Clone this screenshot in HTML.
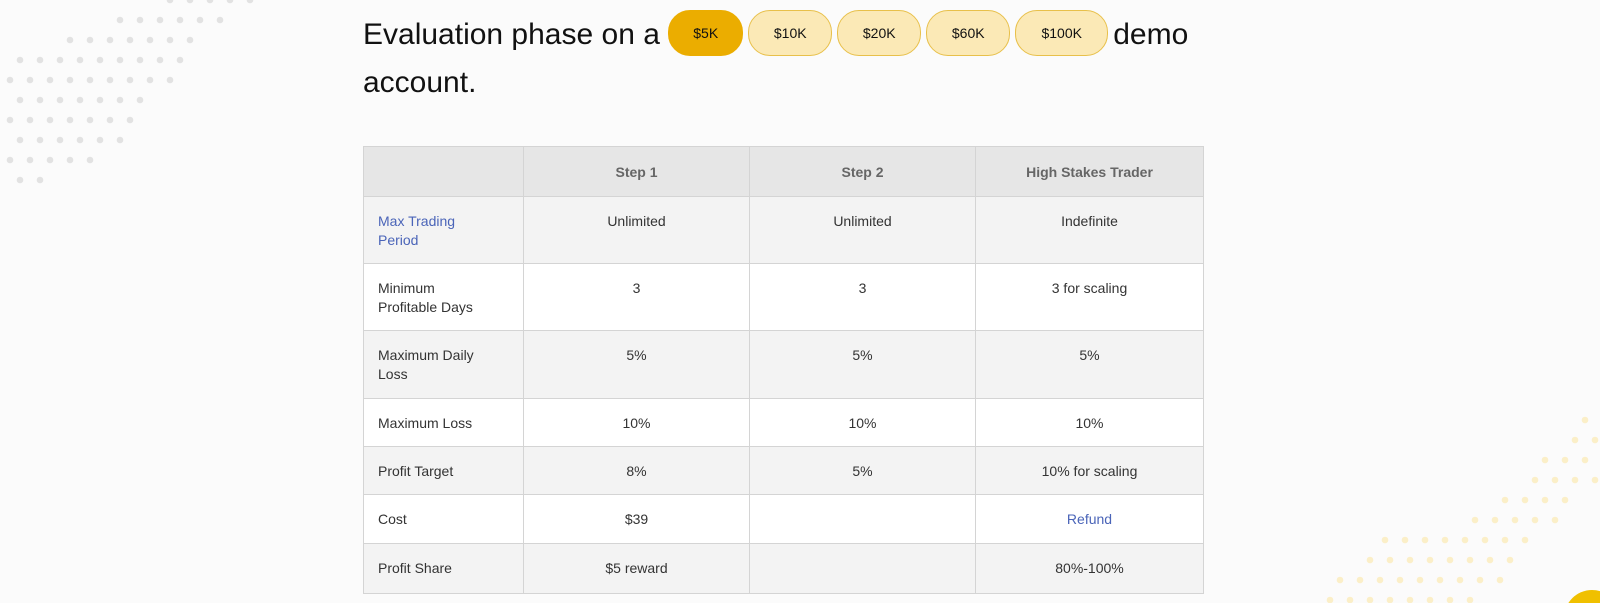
<!DOCTYPE html>
<html><head><meta charset="utf-8"><style>
html,body{margin:0;padding:0;width:1600px;height:603px;overflow:hidden;background:#fbfbfb;position:relative;}
#bg{position:absolute;left:0;top:0}
.h{position:absolute;left:363px;top:11px;width:850px;font-family:"Liberation Sans",sans-serif;font-size:30px;line-height:48px;color:#111;}
.b{display:inline-block;vertical-align:middle;height:44px;line-height:44px;border:1px solid #e8c04a;background:#fbe9b6;border-radius:22px;font-size:14px;text-align:center;margin-right:5px;position:relative;top:-3px;}
table{position:absolute;left:363px;top:146px;border-collapse:collapse;font-family:"Liberation Sans",sans-serif;font-size:14px;color:#333;}
td,th{border:1px solid #d4d4d4;padding:0;vertical-align:top;text-align:center;}
th{background:#e6e6e6;color:#666;font-weight:bold;height:49px;vertical-align:middle;}
td{padding-top:15px;line-height:19px;box-sizing:border-box;}
td:first-child{text-align:left;padding-left:14px;}
tr.g td{background:#f3f3f3}
tr.w td{background:#fff}
a{color:#4a64b8;text-decoration:none}
</style></head><body>
<svg id="bg" width="1600" height="603"></svg>
<div class="h">Evaluation phase on a <span class="b" style="width:73px;background:#ebad00;border-color:#ebad00">$5K</span><span class="b" style="width:82px">$10K</span><span class="b" style="width:82px">$20K</span><span class="b" style="width:82px">$60K</span><span class="b" style="width:91px">$100K</span>demo account.</div>
<table>
<tr><th style="width:159px"></th><th style="width:225px">Step 1</th><th style="width:225px">Step 2</th><th style="width:227px">High Stakes Trader</th></tr>
<tr class="g" style="height:67px"><td><a>Max Trading<br>Period</a></td><td>Unlimited</td><td>Unlimited</td><td>Indefinite</td></tr>
<tr class="w" style="height:67px"><td>Minimum<br>Profitable Days</td><td>3</td><td>3</td><td>3 for scaling</td></tr>
<tr class="g" style="height:68px"><td>Maximum Daily<br>Loss</td><td>5%</td><td>5%</td><td>5%</td></tr>
<tr class="w" style="height:48px"><td>Maximum Loss</td><td>10%</td><td>10%</td><td>10%</td></tr>
<tr class="g" style="height:48px"><td>Profit Target</td><td>8%</td><td>5%</td><td>10% for scaling</td></tr>
<tr class="w" style="height:49px"><td>Cost</td><td>$39</td><td></td><td><a>Refund</a></td></tr>
<tr class="g" style="height:50px"><td>Profit Share</td><td>$5 reward</td><td></td><td>80%-100%</td></tr>
</table>
<script>
var s=document.getElementById('bg'),h='';
var g=[[0,170,250],[20,120,220],[40,70,190],[60,20,180],[80,10,170],[100,20,140],[120,10,130],[140,20,120],[160,10,90],[180,20,40]];
g.forEach(function(r){for(var x=r[1];x<=r[2];x+=20)h+='<circle cx="'+x+'" cy="'+r[0]+'" r="3.3" fill="#e2e2e2"/>';});
var y=[[420,1585,1585],[440,1575,1595],[460,1545,1585],[480,1535,1595],[500,1505,1565],[520,1475,1555],[540,1385,1525],[560,1370,1515],[580,1340,1505],[600,1330,1480]];
y.forEach(function(r){for(var x=r[1];x<=r[2];x+=20)h+='<circle cx="'+x+'" cy="'+r[0]+'" r="3.3" fill="#fbefc8"/>';});
h+='<circle cx="1592" cy="618" r="28" fill="#f0c000"/>';
s.innerHTML=h;
</script>
</body></html>
